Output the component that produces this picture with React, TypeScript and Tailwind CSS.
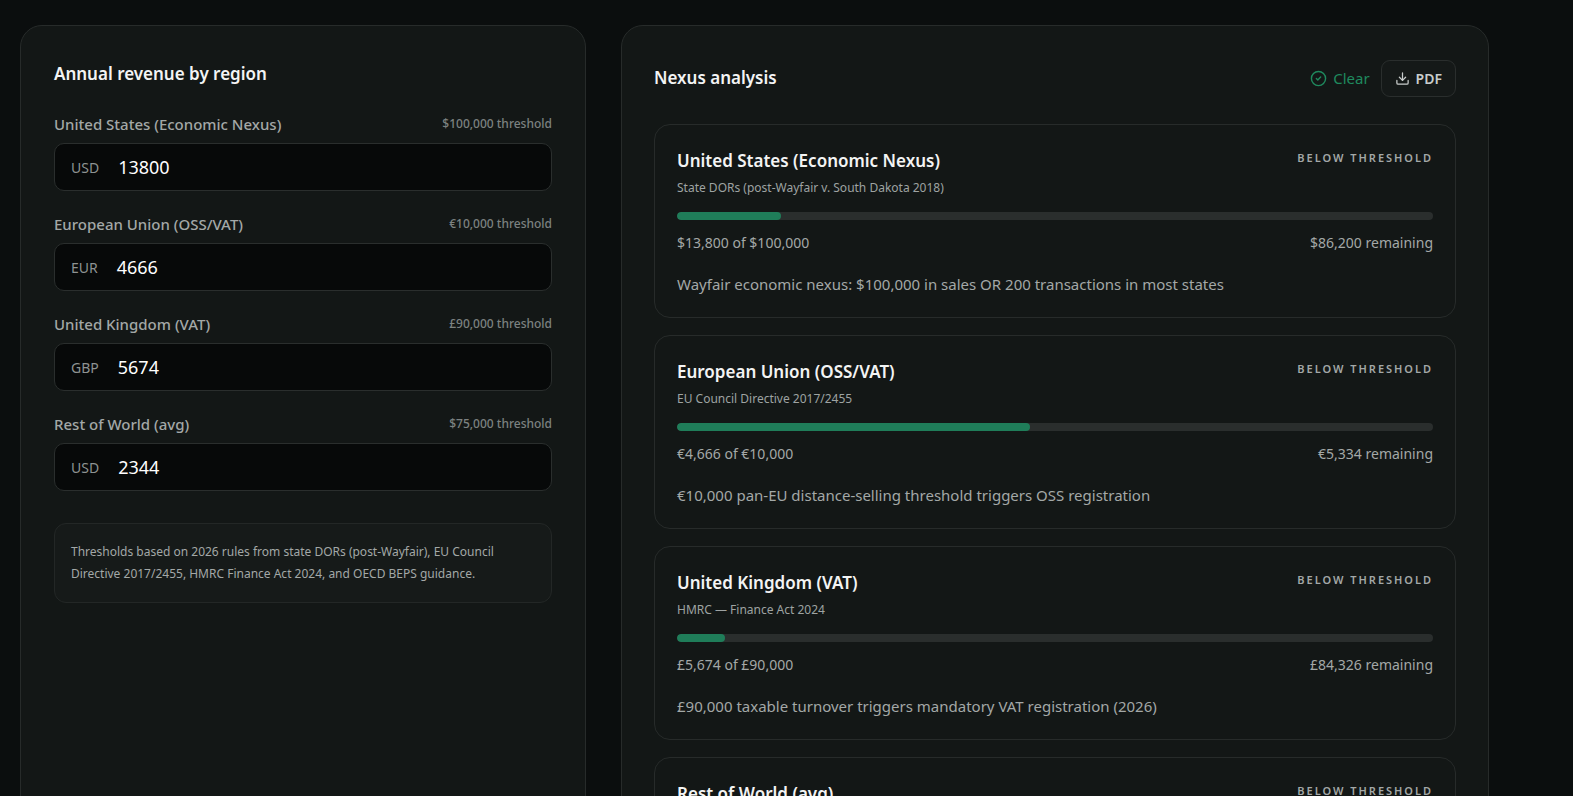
import React from "react";

const inputs = [
  { label: "United States (Economic Nexus)", th: "$100,000 threshold", cur: "USD", val: "13800" },
  { label: "European Union (OSS/VAT)", th: "€10,000 threshold", cur: "EUR", val: "4666" },
  { label: "United Kingdom (VAT)", th: "£90,000 threshold", cur: "GBP", val: "5674" },
  { label: "Rest of World (avg)", th: "$75,000 threshold", cur: "USD", val: "2344" },
];

const cards = [
  { t: "United States (Economic Nexus)", s: "State DORs (post-Wayfair v. South Dakota 2018)", p: 13.8, a: "$13,800 of $100,000", r: "$86,200 remaining", n: "Wayfair economic nexus: $100,000 in sales OR 200 transactions in most states" },
  { t: "European Union (OSS/VAT)", s: "EU Council Directive 2017/2455", p: 46.66, a: "€4,666 of €10,000", r: "€5,334 remaining", n: "€10,000 pan-EU distance-selling threshold triggers OSS registration" },
  { t: "United Kingdom (VAT)", s: "HMRC — Finance Act 2024", p: 6.3, a: "£5,674 of £90,000", r: "£84,326 remaining", n: "£90,000 taxable turnover triggers mandatory VAT registration (2026)" },
  { t: "Rest of World (avg)", s: "OECD BEPS guidance", p: 3.1, a: "$2,344 of $75,000", r: "$72,656 remaining", n: "Average threshold" },
];

export default function App() {
  return (
    <div className="h-[796px] overflow-hidden bg-[#0b0e0e] text-white flex gap-[35px] pl-[20px] pt-[25px]" style={{ fontFamily: '"Noto Sans", "Open Sans", sans-serif' }}>
      <div className="w-[566px] h-[800px] shrink-0 rounded-[22px] border border-[#272b2a] bg-[#131716] px-[33px] pt-[36px]">
        <h2 className="text-[17px] font-semibold text-[#f3f4f4] leading-[24px]">Annual revenue by region</h2>
        <div className="mt-[28px] flex flex-col gap-[23px]">
          {inputs.map((i) => (
            <div key={i.label}>
              <div className="flex justify-between items-center h-[20px]">
                <span className="text-[15px] font-medium text-[#a3a8a7]">{i.label}</span>
                <span className="text-[12px] font-medium text-[#7c8180]">{i.th}</span>
              </div>
              <div className="mt-[9px] h-[48px] rounded-[10px] border border-[#2a2e2d] bg-[#070909] flex items-center px-[16px] gap-[19px]">
                <span className="text-[14px] text-[#8e9392]">{i.cur}</span>
                <span className="text-[18px] text-white">{i.val}</span>
              </div>
            </div>
          ))}
        </div>
        <div className="mt-[32px] rounded-[12px] border border-[#232726] bg-[#161a19] px-[16px] py-[17px] text-[12px] leading-[22px] text-[#a3a8a7]">
          Thresholds based on 2026 rules from state DORs (post-Wayfair), EU Council Directive 2017/2455, HMRC Finance Act 2024, and OECD BEPS guidance.
        </div>
      </div>
      <div className="w-[868px] h-[800px] shrink-0 rounded-[22px] border border-[#272b2a] bg-[#131716] px-[32px] pt-[33px]">
        <div className="flex items-center justify-between h-[38px]">
          <h2 className="text-[17px] font-semibold text-[#f3f4f4]">Nexus analysis</h2>
          <div className="flex items-center gap-[11px]">
            <span className="flex items-center gap-[6px] text-[15px] text-[#1f8a5e]">
              <svg width="17" height="17" viewBox="0 0 24 24" fill="none" stroke="currentColor" strokeWidth="2" strokeLinecap="round" strokeLinejoin="round"><circle cx="12" cy="12" r="10"/><path d="m9 12 2 2 4-4"/></svg>
              Clear
            </span>
            <span className="flex items-center gap-[6px] h-[37px] px-[13px] rounded-[9px] border border-[#2a2e2d] bg-[#151918] text-[14px] font-semibold text-[#c9cdcc]">
              <svg width="15" height="15" viewBox="0 0 24 24" fill="none" stroke="currentColor" strokeWidth="2" strokeLinecap="round" strokeLinejoin="round"><path d="M12 15V3"/><path d="M21 15v4a2 2 0 0 1-2 2H5a2 2 0 0 1-2-2v-4"/><path d="m7 10 5 5 5-5"/></svg>
              PDF
            </span>
          </div>
        </div>
        <div className="mt-[27px] flex flex-col gap-[17px]">
          {cards.map((c) => (
            <div key={c.t} className="h-[194px] shrink-0 rounded-[16px] border border-[#272b2a] bg-[#131716] px-[22px] pt-[24px]">
              <div className="flex justify-between items-start">
                <div>
                  <div className="text-[17px] font-semibold text-[#f3f4f4] leading-[24px]">{c.t}</div>
                  <div className="text-[12px] text-[#9ea3a2] mt-[6px]">{c.s}</div>
                </div>
                <span className="text-[11px] font-semibold tracking-[0.18em] text-[#a3a8a7] mt-[1px]">BELOW THRESHOLD</span>
              </div>
              <div className="mt-[15px] h-[8px] rounded-full bg-[#2a2e2d] overflow-hidden">
                <div className="h-full rounded-full bg-[#1f7d59]" style={{ width: `${c.p}%` }} />
              </div>
              <div className="mt-[12px] flex justify-between text-[14px] text-[#a3a8a7]">
                <span>{c.a}</span><span>{c.r}</span>
              </div>
              <div className="mt-[20px] text-[15px] text-[#a3a8a7]">{c.n}</div>
            </div>
          ))}
        </div>
      </div>
    </div>
  );
}
